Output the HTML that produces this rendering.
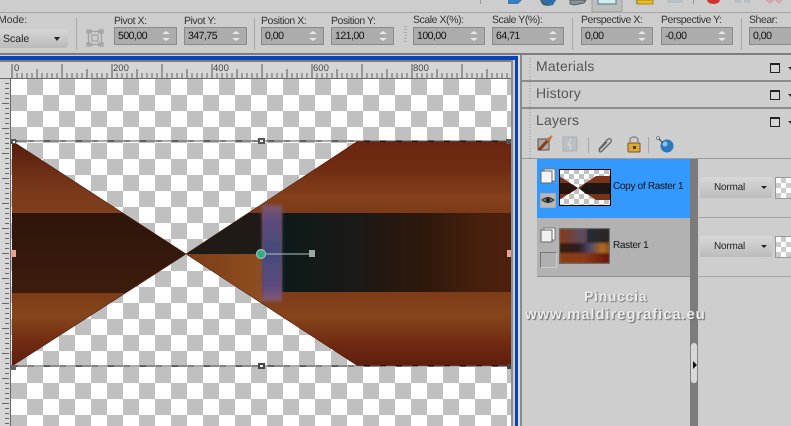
<!DOCTYPE html>
<html><head><meta charset="utf-8"><style>
html,body{margin:0;padding:0;width:791px;height:426px;overflow:hidden;background:#cecece;font-family:"Liberation Sans",sans-serif;text-rendering:geometricPrecision}
.a{position:absolute}
#root{position:relative;width:791px;height:426px;overflow:hidden}
.lab{position:absolute;top:15px;font-size:10.500px;color:#333;white-space:nowrap;letter-spacing:-.45px}
.fld{position:absolute;top:27px;height:16px;background:#acacac;border:1px solid #8a8a8a;font-size:10.500px;letter-spacing:-.5px;color:#111;line-height:17px;padding-left:3px;box-sizing:content-box}
.fld:after{content:"";position:absolute;right:6px;top:3px;border:4px solid transparent;border-top:0;border-bottom:3px solid #e8e8e8}
.fld:before{content:"";position:absolute;right:6px;bottom:3px;border:4px solid transparent;border-bottom:0;border-top:3px solid #e8e8e8}
.sep{position:absolute;top:18px;width:1px;height:32px;background:#a9a9a9}
.hd{position:absolute;left:536px;font-size:14px;color:#555;letter-spacing:.2px}
.win{position:absolute;left:770px;width:8px;height:7px;border:1px solid #222;border-top-width:2px;background:#d4d4d4}
.arr{position:absolute;left:788px;width:0;height:0;border:3px solid transparent;border-top:3px solid #222;border-bottom:0}
.hl{position:absolute;left:521px;width:270px;height:2px;background:#8c8c8c}
.dd{position:absolute;left:700px;width:72px;height:21px;background:linear-gradient(#d8d8d8,#bcbcbc);font-size:10px;letter-spacing:-.2px;color:#222;line-height:21px;text-indent:14px}
.dd:after{content:"";position:absolute;right:5px;top:9px;border:3px solid transparent;border-top:3px solid #222;border-bottom:0}
.ck{position:absolute;left:775px;width:16px;height:20px;border:1px solid #999;background:#fff;background-image:conic-gradient(#ccc 25%,#fff 0 50%,#ccc 0 75%,#fff 0);background-size:10px 10px}
.nm{position:absolute;left:613px;font-size:10px;color:#111;white-space:nowrap;letter-spacing:-.3px}
</style></head><body><div id="root">
<!-- toolbar -->
<div class="a" style="left:0;top:0;width:791px;height:53px;background:#cdcdcd"></div>
<div class="a" style="left:0;top:12px;width:791px;height:1px;background:#a5a5a5"></div>
<svg class="a" style="left:480px;top:0" width="311" height="14" viewBox="0 0 311 14">
<rect x="0" y="0" width="1" height="4" fill="#999"/>
<path d="M28 0h14l-4 4h-10z" fill="#3a7cc0"/>
<path d="M60 0h16l-3 5-5 1-6-2z" fill="#2f6ea8"/><path d="M60 0l6 4 2 2-5-1z" fill="#555"/>
<path d="M90 0h16l-2 3-10 2-4-1z" fill="#8a9298" stroke="#444" stroke-width=".7"/>
<rect x="112" y="-1" width="30" height="13" fill="#bdbdbd" stroke="#a0a0a0"/>
<rect x="118" y="-1" width="18" height="5" fill="#d4ecec" stroke="#447a8a"/>
<rect x="156" y="0" width="1" height="4" fill="#999"/>
<rect x="157" y="0" width="16" height="4" fill="#e6c020" stroke="#8a7010" stroke-width=".7"/>
<rect x="187" y="0" width="16" height="3" fill="#b8c0c8"/>
<rect x="213" y="0" width="1" height="4" fill="#999"/>
<path d="M227 0h13q-1 4-6.500 4t-6.500-4z" fill="#d03030"/>
<rect x="255" y="0" width="6" height="3" fill="#b8bec4"/><rect x="264" y="0" width="6" height="3" fill="#b8bec4"/>
<path d="M285 0h10l-5 4zM295 0h8l-4 4z" fill="#d8a8a8"/>
</svg>
<div class="lab" style="left:-2px;top:14px;letter-spacing:0">Mode:</div>
<div class="a" style="left:-3px;top:29px;width:71px;height:19px;background:linear-gradient(#d6d6d6,#bababa);border-radius:4px;font-size:10.500px;line-height:20px;text-indent:6px;color:#222">Scale</div>
<div class="a" style="left:54px;top:37px;border:3px solid transparent;border-top:4px solid #222;border-bottom:0"></div>
<div class="sep" style="left:76px"></div>
<svg class="a" style="left:86px;top:29px" width="18" height="18" viewBox="0 0 18 18" fill="none" stroke="#a2a2a2" stroke-width="1.300"><rect x="2.500" y="2.500" width="13" height="13"/><rect x="6" y="6" width="6" height="6"/><path d="M1 1h4v3H1zM13 1h4v3h-4zM1 14h4v3H1zM13 14h4v3h-4z"/></svg>
<div class="lab" style="left:114px">Pivot X:</div><div class="fld" style="left:114px;width:58px">500,00</div>
<div class="lab" style="left:184px">Pivot Y:</div><div class="fld" style="left:184px;width:58px">347,75</div>
<div class="sep" style="left:254px"></div>
<div class="lab" style="left:261px">Position X:</div><div class="fld" style="left:261px;width:58px">0,00</div>
<div class="lab" style="left:331px">Position Y:</div><div class="fld" style="left:331px;width:58px">121,00</div>
<div class="a" style="left:404px;top:26px;width:3px;height:18px;background:repeating-linear-gradient(#aaa 0 1px,transparent 1px 3px)"></div>
<div class="lab" style="left:413px;top:14px">Scale X(%):</div><div class="fld" style="left:413px;width:67px">100,00</div>
<div class="lab" style="left:492px;top:14px">Scale Y(%):</div><div class="fld" style="left:492px;width:67px">64,71</div>
<div class="sep" style="left:572px"></div>
<div class="lab" style="left:581px;top:14px">Perspective X:</div><div class="fld" style="left:581px;width:67px">0,00</div>
<div class="lab" style="left:661px;top:14px">Perspective Y:</div><div class="fld" style="left:661px;width:67px">-0,00</div>
<div class="sep" style="left:741px"></div>
<div class="lab" style="left:749px;top:14px">Shear:</div><div class="fld" style="left:749px;width:60px">0,00</div>
<div class="a" style="left:0;top:53px;width:791px;height:2px;background:#7d7d7d"></div>

<!-- doc window -->
<div class="a" style="left:0;top:55px;width:521px;height:371px;background:#cfcfcf"></div>
<div class="a" style="left:0;top:56px;width:518px;height:4px;background:#0a45b8"></div>
<div class="a" style="left:515px;top:56px;width:3px;height:370px;background:#0a45b8"></div>
<div class="a" style="left:0;top:60px;width:512px;height:2px;background:#7c7c7c"></div>
<div class="a" style="left:518px;top:55px;width:2px;height:371px;background:#dedede"></div>
<div class="a" style="left:520px;top:55px;width:2px;height:371px;background:#8a8a8a"></div>
<div class="a" style="left:511px;top:60px;width:2px;height:366px;background:#8d8d8d"></div>
<!-- rulers -->
<div class="a" style="left:0;top:62px;width:511px;height:16px;background:#d6d6d6"></div>
<div class="a" style="left:0;top:78px;width:511px;height:1px;background:#6a6a6a"></div>
<svg class="a" style="left:0;top:60px" width="511" height="18" viewBox="0 0 511 18" font-family="Liberation Sans,sans-serif" font-size="9.500" fill="#444">
<path d="M12 4v14M62 4v14M112 4v14M162 4v14M212 4v14M262 4v14M312 4v14M362 4v14M412 4v14M462 4v14M37 9v9M87 9v9M137 9v9M187 9v9M237 9v9M287 9v9M337 9v9M387 9v9M437 9v9M487 9v9" stroke="#555" fill="none"/>
<path d="M17 13v5M22 13v5M27 13v5M32 13v5M42 13v5M47 13v5M52 13v5M57 13v5M67 13v5M72 13v5M77 13v5M82 13v5M92 13v5M97 13v5M102 13v5M107 13v5M117 13v5M122 13v5M127 13v5M132 13v5M142 13v5M147 13v5M152 13v5M157 13v5M167 13v5M172 13v5M177 13v5M182 13v5M192 13v5M197 13v5M202 13v5M207 13v5M217 13v5M222 13v5M227 13v5M232 13v5M242 13v5M247 13v5M252 13v5M257 13v5M267 13v5M272 13v5M277 13v5M282 13v5M292 13v5M297 13v5M302 13v5M307 13v5M317 13v5M322 13v5M327 13v5M332 13v5M342 13v5M347 13v5M352 13v5M357 13v5M367 13v5M372 13v5M377 13v5M382 13v5M392 13v5M397 13v5M402 13v5M407 13v5M417 13v5M422 13v5M427 13v5M432 13v5M442 13v5M447 13v5M452 13v5M457 13v5M467 13v5M472 13v5M477 13v5M482 13v5M492 13v5M497 13v5M502 13v5M507 13v5" stroke="#666" fill="none"/>
<text x="14" y="11">0</text><text x="113" y="11">200</text><text x="213" y="11">400</text><text x="313" y="11">600</text><text x="413" y="11">800</text>
</svg>
<div class="a" style="left:0;top:79px;width:10px;height:347px;background:#d6d6d6"></div>
<div class="a" style="left:5px;top:83px;width:4px;height:343px;background:repeating-linear-gradient(#666 0 1px,transparent 1px 5px)"></div>
<div class="a" style="left:2px;top:103px;width:7px;height:323px;background:repeating-linear-gradient(#666 0 1px,transparent 1px 25px)"></div>
<div class="a" style="left:10px;top:79px;width:1px;height:347px;background:#666"></div>
<!-- canvas -->
<svg class="a" style="left:11px;top:79px" width="500" height="347" viewBox="11 79 500 347">
<defs>
<pattern id="ch" x="11" y="79" width="32" height="32" patternUnits="userSpaceOnUse">
<rect x="0" y="0" width="32" height="32" fill="#fff"/><rect x="16" y="0" width="16" height="16" fill="#c0c0c0"/><rect x="0" y="16" width="16" height="16" fill="#c0c0c0"/>
</pattern>
<linearGradient id="v" x1="0" y1="141" x2="0" y2="366" gradientUnits="userSpaceOnUse">
<stop offset="0" stop-color="#682410"/><stop offset=".12" stop-color="#702c12"/><stop offset=".25" stop-color="#84401a"/><stop offset=".32" stop-color="#7c3a18"/>
<stop offset=".68" stop-color="#7e3c18"/><stop offset=".78" stop-color="#86451b"/><stop offset=".9" stop-color="#702a12"/><stop offset="1" stop-color="#5e1e0e"/>
</linearGradient>
<linearGradient id="vl" x1="0" y1="141" x2="0" y2="213" gradientUnits="userSpaceOnUse">
<stop offset="0" stop-color="#4a1a0c"/><stop offset=".5" stop-color="#70301a"/><stop offset="1" stop-color="#823e1c"/>
</linearGradient>
<linearGradient id="d" x1="282" y1="0" x2="511" y2="0" gradientUnits="userSpaceOnUse">
<stop offset="0" stop-color="#0c1a1a"/><stop offset=".3" stop-color="#1a1916"/><stop offset=".6" stop-color="#2c170c"/><stop offset=".85" stop-color="#45200c"/><stop offset="1" stop-color="#4e200e"/>
</linearGradient>
<linearGradient id="dl" x1="0" y1="213" x2="0" y2="293" gradientUnits="userSpaceOnUse">
<stop offset="0" stop-color="#2e150a"/><stop offset=".5" stop-color="#35180c"/><stop offset="1" stop-color="#3c1c0c"/>
</linearGradient>
<linearGradient id="p" x1="0" y1="205" x2="0" y2="301" gradientUnits="userSpaceOnUse">
<stop offset="0" stop-color="#80586c"/><stop offset=".15" stop-color="#5e4c7c"/><stop offset=".5" stop-color="#444a7c"/><stop offset=".85" stop-color="#5e4c80"/><stop offset="1" stop-color="#865874"/>
</linearGradient>
<linearGradient id="or" x1="186" y1="0" x2="262" y2="0" gradientUnits="userSpaceOnUse">
<stop offset="0" stop-color="#7c3c18"/><stop offset="1" stop-color="#8e4e1e"/>
</linearGradient>
<filter id="bl" x="-30%" y="-10%" width="160%" height="120%"><feGaussianBlur stdDeviation="1.500"/></filter>
<clipPath id="cp"><path d="M12 141L186 254 12 366zM186 254L358 141H511V366H358z"/></clipPath>
</defs>
<rect x="11" y="79" width="500" height="347" fill="url(#ch)"/>
<g clip-path="url(#cp)">
<rect x="12" y="141" width="499" height="225" fill="url(#v)"/>
<rect x="12" y="141" width="174" height="72" fill="url(#vl)" opacity=".7"/>
<rect x="12" y="213" width="174" height="80" fill="url(#dl)"/>
<rect x="186" y="213" width="76" height="41" fill="#1f1a16"/>
<rect x="186" y="254" width="76" height="60" fill="url(#or)"/>
<rect x="282" y="213" width="229" height="79" fill="url(#d)"/>
<rect x="262" y="205" width="20" height="96" fill="url(#p)" filter="url(#bl)"/>
</g>
<path d="M12 141L186 254 12 366M186 254L358 141M186 254L358 366" fill="none" stroke="#4a1e0e" stroke-width=".6"/>
<path d="M12 141H511M12 366H511" stroke="#555" stroke-width="1"/>
<path d="M12 141H511M12 366H511" stroke="#000" stroke-width="1" stroke-dasharray="6 10"/>
<rect x="11" y="139" width="5" height="5" fill="#555"/><rect x="13" y="141" width="2" height="2" fill="#eee"/>
<rect x="258" y="138" width="7" height="6" fill="#555"/><rect x="260" y="140" width="3" height="2" fill="#eee"/>
<rect x="506" y="139" width="5" height="5" fill="#555"/>
<rect x="11" y="250" width="5" height="7" fill="#e8a090"/>
<rect x="507" y="250" width="4" height="7" fill="#e8a090"/>
<rect x="11" y="365" width="5" height="5" fill="#666"/>
<rect x="258" y="363" width="7" height="6" fill="#444"/><rect x="260" y="365" width="3" height="2" fill="#eee"/>
<rect x="507" y="364" width="4" height="5" fill="#444"/>
<path d="M262 254H312" stroke="#b0c4c4" stroke-width="1"/>
<rect x="309" y="250" width="6" height="7" fill="#9aa8a4"/>
<circle cx="261" cy="254" r="4.500" fill="#2cb088" stroke="#a8b8b8" stroke-width="1.200"/>
</svg>

<!-- right panel -->
<div class="a" style="left:522px;top:55px;width:269px;height:371px;background:#cecece"></div>
<div class="a" style="left:529px;top:58px;width:2px;height:100px;background:repeating-linear-gradient(#b0b0b0 0 1px,transparent 1px 3px)"></div>
<div class="hd" style="top:58px">Materials</div>
<div class="win" style="top:63px"></div><div class="arr" style="top:67px"></div>
<div class="hl" style="top:80px"></div>
<div class="hd" style="top:85px">History</div>
<div class="win" style="top:90px"></div><div class="arr" style="top:94px"></div>
<div class="hl" style="top:107px"></div>
<div class="hd" style="top:112px">Layers</div>
<div class="win" style="top:117px"></div><div class="arr" style="top:121px"></div>
<!-- layer toolbar -->
<svg class="a" style="left:536px;top:135px" width="142" height="20" viewBox="0 0 142 20">
<rect x="2" y="4" width="11" height="11" fill="#b0a8a0" stroke="#555"/><path d="M3 15L14 3" stroke="#8a3a1a" stroke-width="3"/><path d="M11 6l5-5" stroke="#c08030" stroke-width="2"/>
<rect x="27" y="2" width="14" height="14" fill="#b8c0c4" stroke="#a8b0b4"/><path d="M35 4l-3 6h3l-1 4" stroke="#d8dce0" fill="none"/>
<rect x="52" y="2" width="1" height="16" fill="#a8a8a8"/>
<path d="M63 14l8-9c3-3 6 0 3 3l-8 8c-2 2-4 0-2-2l7-7" fill="none" stroke="#666" stroke-width="1.300"/>
<rect x="92" y="8" width="12" height="9" rx="1" fill="#dcaa3a" stroke="#7a5a1a"/><path d="M94 8V5c0-4 8-4 8 0v3" fill="none" stroke="#888" stroke-width="1.500"/><rect x="97" y="11" width="3" height="3" fill="#5a3a10"/>
<rect x="112" y="2" width="1" height="16" fill="#a8a8a8"/>
<circle cx="131" cy="11" r="6.500" fill="#2a78c0"/><circle cx="129" cy="9" r="2.500" fill="#88c4f0"/><path d="M122 3l5 5" stroke="#444" stroke-width="1.200"/><circle cx="122" cy="3" r="1.500" fill="#ddd" stroke="#444" stroke-width=".6"/>
</svg>
<div class="a" style="left:522px;top:158px;width:269px;height:1px;background:#9a9a9a"></div>
<!-- layers -->
<div class="a" style="left:537px;top:159px;width:153px;height:59px;background:#3399ff"></div>
<div class="a" style="left:537px;top:218px;width:153px;height:58px;background:#b2b2b2"></div>
<div class="a" style="left:537px;top:276px;width:153px;height:1px;background:#8e8e8e"></div>
<div class="a" style="left:690px;top:159px;width:8px;height:267px;background:#7b7b7b"></div>
<div class="a" style="left:698px;top:217px;width:93px;height:1px;background:#a4a4a4"></div>
<div class="a" style="left:698px;top:276px;width:93px;height:1px;background:#a4a4a4"></div>
<!-- handle -->
<div class="a" style="left:691px;top:343px;width:6px;height:40px;background:#d8d8d8;border-radius:3px;box-shadow:0 0 0 .5px #888"></div>
<div class="a" style="left:693px;top:361px;border:4px solid transparent;border-left:4px solid #111;border-right:0"></div>
<!-- layer icons -->
<svg class="a" style="left:540px;top:168px" width="16" height="16"><rect x="4" y="1" width="11" height="12" fill="#fff" stroke="#777"/><rect x="1" y="3" width="11" height="12" fill="#f4f4f4" stroke="#666"/></svg>
<svg class="a" style="left:540px;top:227px" width="16" height="16"><rect x="4" y="1" width="11" height="12" fill="#fff" stroke="#777"/><rect x="1" y="3" width="11" height="12" fill="#f0f0f0" stroke="#666"/></svg>
<svg class="a" style="left:540px;top:193px" width="16" height="15"><rect x=".5" y=".5" width="15" height="14" fill="#b8b8b8" stroke="#aaa"/><path d="M2 7q6-5 12 0q-6 5-12 0z" fill="#777" stroke="#333"/><circle cx="8" cy="7" r="2.200" fill="#222"/></svg>
<div class="a" style="left:540px;top:252px;width:15px;height:14px;background:#b0b0b0;border:1px solid #777;border-right-color:#ccc;border-bottom-color:#ccc"></div>
<!-- thumb 1 -->
<svg class="a" style="left:559px;top:169px" width="52" height="37" viewBox="0 0 52 37">
<defs><pattern id="c2" width="10" height="10" patternUnits="userSpaceOnUse"><rect width="10" height="10" fill="#fff"/><rect x="5" width="5" height="5" fill="#c0c0c0"/><rect y="5" width="5" height="5" fill="#c0c0c0"/></pattern></defs>
<rect width="52" height="37" fill="url(#c2)"/>
<path d="M0 7L19 19 0 31zM19 19L37 7H52V31H37z" fill="#78341a"/>
<path d="M0 14h10l9 5-9 6H0z" fill="#2a130a"/><path d="M27 14H52V25H27l-6-5z" fill="#1e1612"/>
<rect x=".5" y=".5" width="51" height="36" fill="none" stroke="#000"/>
</svg>
<!-- thumb 2 -->
<svg class="a" style="left:559px;top:228px" width="51" height="36" viewBox="0 0 51 36">
<defs><linearGradient id="t2" x1="0" x2="1" y1="0" y2="0"><stop offset="0" stop-color="#8a3a14"/><stop offset=".45" stop-color="#5a4a60"/><stop offset="1" stop-color="#6a2410"/></linearGradient>
<linearGradient id="t3" x1="0" x2="1" y1="0" y2="0"><stop offset="0" stop-color="#3a1a0a"/><stop offset=".4" stop-color="#2e2020"/><stop offset=".6" stop-color="#50486a"/><stop offset=".85" stop-color="#b06a20"/><stop offset="1" stop-color="#8e4a18"/></linearGradient>
<linearGradient id="t4" x1="0" x2="1" y1="0" y2="0"><stop offset="0" stop-color="#8a4018"/><stop offset=".5" stop-color="#8a3a14"/><stop offset="1" stop-color="#6a1408"/></linearGradient>
<filter id="tb"><feGaussianBlur stdDeviation="1"/></filter></defs>
<g filter="url(#tb)"><rect width="51" height="15" fill="url(#t2)"/><rect x="28" width="23" height="15" fill="#16262a" opacity=".75"/>
<rect y="15" width="51" height="10" fill="url(#t3)"/><rect y="25" width="51" height="11" fill="url(#t4)"/></g>
<rect x=".5" y=".5" width="50" height="35" fill="none" stroke="#6a6a6a"/>
</svg>
<div class="nm" style="top:181px">Copy of Raster 1</div>
<div class="nm" style="top:240px">Raster 1</div>
<div class="dd" style="top:177px">Normal</div><div class="ck" style="top:177px"></div>
<div class="dd" style="top:236px">Normal</div><div class="ck" style="top:236px"></div>
<!-- watermark -->
<div class="a" style="left:584px;top:288px;font-size:14px;font-weight:bold;color:#ececec;letter-spacing:.7px;text-shadow:1px 1px 1px #777,0 0 1px #aaa;white-space:nowrap">Pinuccia</div>
<div class="a" style="left:525px;top:306px;font-size:15px;font-weight:bold;color:#ececec;letter-spacing:.85px;text-shadow:1px 1px 1px #666,0 0 1px #999;white-space:nowrap">www.maldiregrafica.eu</div>
</div></body></html>
